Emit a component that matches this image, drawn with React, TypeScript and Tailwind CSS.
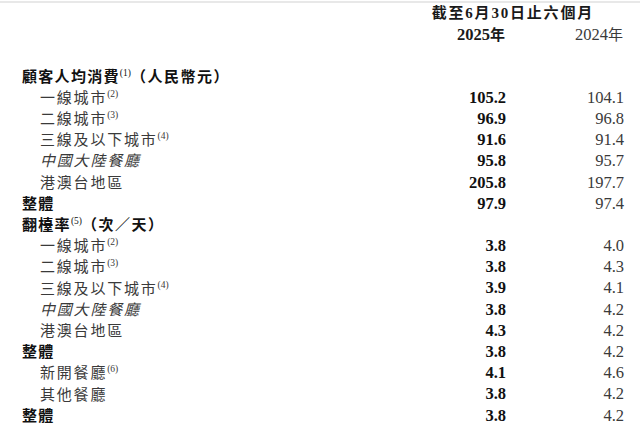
import React from 'react'

type Row = {
  label: string
  note?: string
  suffix?: string
  kind: 'head' | 'item' | 'italic' | 'total'
  a?: string
  b?: string
}

const rows: Row[] = [
  { label: '顧客人均消費', note: '(1)', suffix: '（人民幣元）', kind: 'head' },
  { label: '一線城市', note: '(2)', kind: 'item', a: '105.2', b: '104.1' },
  { label: '二線城市', note: '(3)', kind: 'item', a: '96.9', b: '96.8' },
  { label: '三線及以下城市', note: '(4)', kind: 'item', a: '91.6', b: '91.4' },
  { label: '中國大陸餐廳', kind: 'italic', a: '95.8', b: '95.7' },
  { label: '港澳台地區', kind: 'item', a: '205.8', b: '197.7' },
  { label: '整體', kind: 'total', a: '97.9', b: '97.4' },
  { label: '翻檯率', note: '(5)', suffix: '（次／天）', kind: 'head' },
  { label: '一線城市', note: '(2)', kind: 'item', a: '3.8', b: '4.0' },
  { label: '二線城市', note: '(3)', kind: 'item', a: '3.8', b: '4.3' },
  { label: '三線及以下城市', note: '(4)', kind: 'item', a: '3.9', b: '4.1' },
  { label: '中國大陸餐廳', kind: 'italic', a: '3.8', b: '4.2' },
  { label: '港澳台地區', kind: 'item', a: '4.3', b: '4.2' },
  { label: '整體', kind: 'total', a: '3.8', b: '4.2' },
  { label: '新開餐廳', note: '(6)', kind: 'item', a: '4.1', b: '4.6' },
  { label: '其他餐廳', kind: 'item', a: '3.8', b: '4.2' },
  { label: '整體', kind: 'total', a: '3.8', b: '4.2' },
]

const font = { fontFamily: '"Liberation Serif", "Noto Sans CJK TC", serif' }

export default function App() {
  return (
    <div className="w-[640px] h-[433px] bg-white overflow-hidden" style={font}>
      <div className="mt-px border-t-2 border-[#e8e8e8]" />

      {/* Column headings */}
      <div className="flex justify-end pr-[46px] h-[21px] items-center text-[15px] font-bold text-[#1a1a1a] tracking-[1.8px]">
        截至6月30日止六個月
      </div>
      <div className="flex h-[23px] items-center text-[16.5px]">
        <div className="flex-1" />
        <div className="w-[90px] text-right font-bold text-[#1a1a1a]">
          2025<span className="text-[15px]">年</span>
        </div>
        <div className="w-[118px] pr-[17px] text-right text-[#3a3a3a] box-content">
          2024<span className="text-[15px]">年</span>
        </div>
      </div>
      <div className="h-[19.4px]" />

      {/* Body */}
      <div className="flex flex-col">
        {rows.map((r, i) => {
          const bold = r.kind === 'head' || r.kind === 'total'
          return (
            <div key={i} className="flex h-[21.2px] items-center">
              <div
                className={
                  bold
                    ? 'flex-1 pl-[22px] text-[15px] font-bold text-[#111] tracking-[1.3px] whitespace-nowrap'
                    : r.kind === 'italic'
                      ? 'flex-1 pl-[40px] text-[15px] italic text-[#3a3a3a] tracking-[1.8px] whitespace-nowrap'
                      : 'flex-1 pl-[40px] text-[15px] text-[#3a3a3a] tracking-[1.8px] whitespace-nowrap'
                }
              >
                {r.label}
                {r.note && (
                  <sup className="text-[9.5px] font-normal tracking-normal -top-[6px]">{r.note}</sup>
                )}
                {r.suffix && <span className="tracking-[1.5px]">{r.suffix}</span>}
              </div>
              <div className="w-[90px] text-right text-[16.5px] font-bold text-[#111]">{r.a}</div>
              <div className="w-[118px] pr-[16px] text-right text-[16.5px] text-[#3a3a3a] box-content">{r.b}</div>
            </div>
          )
        })}
      </div>
    </div>
  )
}
